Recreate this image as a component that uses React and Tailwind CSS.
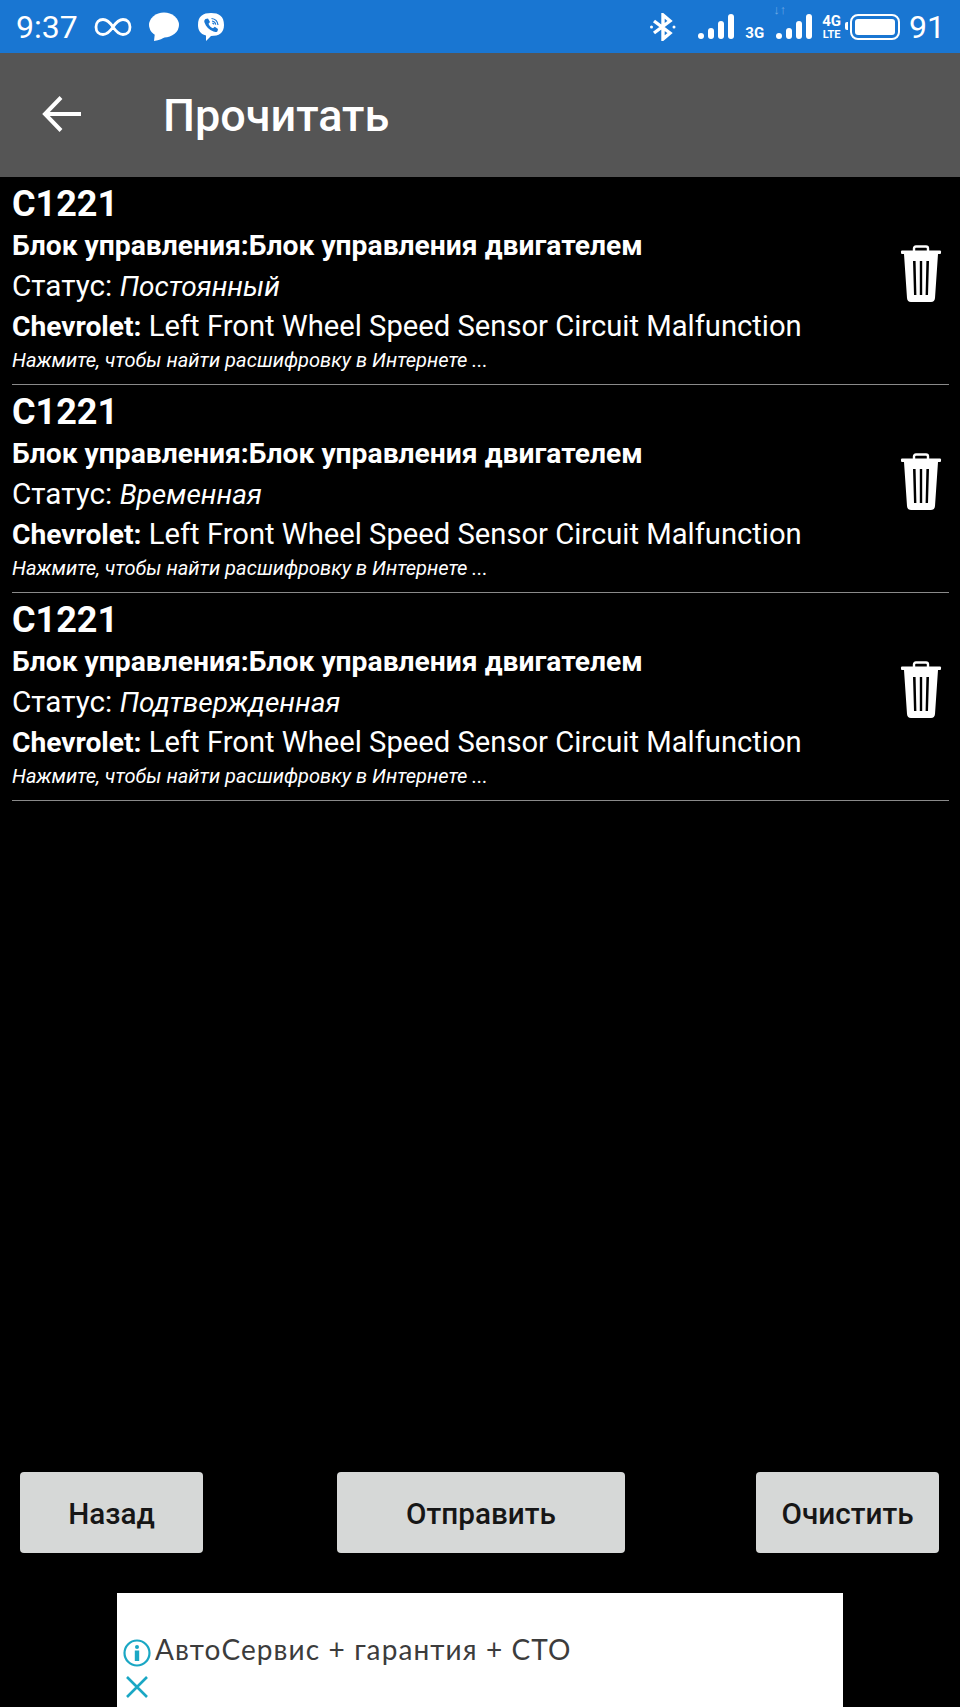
const Trash = () => (
  <svg width="42" height="58" viewBox="0 0 42 58" className="shrink-0">
    <path d="M14 6 V3.5 Q14 1.5 16 1.5 H26 Q28 1.5 28 3.5 V6" fill="none" stroke="#fff" strokeWidth="2.4" />
    <rect x="1" y="5.5" width="40" height="3.6" rx="1" fill="#fff" />
    <path fillRule="evenodd" fill="#fff" d="M4 9 H38 L35 53 Q34.7 57 31 57 H11 Q7.3 57 7 53 Z M13 16 L14 50 H16.4 L15.6 16 Z M19.8 16 V50 H22.2 V16 Z M26.4 16 L25.6 50 H28 L29 16 Z" />
  </svg>
);

const Row = ({ status }) => (
  <div className="flex h-[208px] border-b border-[#8a8a8a] box-border">
    <div className="flex-1 min-w-0 flex flex-col whitespace-nowrap text-white">
      <div className="text-[36px] leading-[44px] font-bold mt-[5px]">C1221</div>
      <div className="text-[28.25px] leading-[40px] font-bold">Блок управления:Блок управления двигателем</div>
      <div className="text-[29.7px] leading-[40px]">
        Статус: <span className="italic text-[28px]">{status}</span>
      </div>
      <div className="text-[29.2px] leading-[39px]">
        <span className="font-bold text-[28.2px]">Chevrolet:</span> Left Front Wheel Speed Sensor Circuit Malfunction
      </div>
      <div className="text-[20.1px] leading-[26px] italic mt-[1px]">Нажмите, чтобы найти расшифровку в Интернете ...</div>
    </div>
    <div className="w-[66px] shrink-0 flex justify-center items-start pt-[68px] pl-[9px]">
      <Trash />
    </div>
  </div>
);

const Signal = () => (
  <svg width="36" height="26" viewBox="0 0 36 26">
    <rect x="0" y="19" width="6" height="6" rx="3" fill="#fff" />
    <rect x="10" y="14" width="6" height="11" rx="3" fill="#fff" />
    <rect x="20" y="7" width="6" height="18" rx="3" fill="#fff" />
    <rect x="30" y="0" width="6" height="25" rx="3" fill="#fff" />
  </svg>
);

const Btn = ({ w, children }) => (
  <button className={`${w} h-[81px] pt-[4px] rounded-[4px] bg-[#d6d8d7] text-[#161616] text-[29.7px] font-medium flex items-center justify-center`}>
    {children}
  </button>
);

export default function App() {
  return (
    <div className="w-[960px] h-[1707px] bg-black flex flex-col overflow-hidden font-['Roboto',sans-serif]">
      <div className="h-[53px] shrink-0 bg-[#1976d2] flex items-center text-white">
        <span className="ml-[16px] text-[32px] leading-none">9:37</span>
        <svg className="ml-[16px]" width="38" height="22" viewBox="0 0 38 22" fill="none" stroke="#fff" strokeWidth="2.8">
          <path d="M19 11 C15 5 12 3.5 9 3.5 C5 3.5 2 6.5 2 11 C2 15.5 5 18.5 9 18.5 C12 18.5 15 17 19 11 C23 5 26 3.5 29 3.5 C33 3.5 36 6.5 36 11 C36 15.5 33 18.5 29 18.5 C26 18.5 23 17 19 11 Z" />
        </svg>
        <svg className="ml-[16px]" width="32" height="30" viewBox="0 0 32 30" fill="#fff">
          <ellipse cx="16" cy="13" rx="15" ry="12.5" />
          <path d="M7 20 L6 29 Q14 28 18 24 Z" />
        </svg>
        <svg className="ml-[17px]" width="28" height="30" viewBox="0 0 28 30">
          <path fill="#fff" d="M14 1 C22 1 27 4 27 13 C27 21 22 24 14 24 L9 29 V23.5 C3 22 1 18 1 13 C1 4 6 1 14 1 Z" />
          <path fill="#1976d2" d="M8.5 7 L11 6.5 L13 10 L11.5 11.8 C12.3 13.8 13.8 15.3 16 16.3 L17.8 14.8 L21 17 L20.5 19.2 C19.5 20.3 18 20.3 16.5 19.6 C12 17.6 9 14.8 7.5 10.5 C7 9 7.4 7.8 8.5 7 Z" />
          <path fill="none" stroke="#1976d2" strokeWidth="1.2" d="M14.5 6.5 C18 6.8 20.5 9 21 13 M15 9 C17 9.2 18.4 10.5 18.7 12.6 M15.4 11.2 C16.2 11.4 16.6 11.8 16.7 12.4" />
        </svg>
        <div className="flex-1" />
        <svg width="26" height="28" viewBox="0 0 26 28" fill="none" stroke="#fff" strokeWidth="3.4" className="mr-[22px]">
          <path d="M4 8 L20 20 L13 26 V2 L20 8 L4 20" />
          <circle cx="1.5" cy="14" r="1.5" fill="#fff" stroke="none" />
          <circle cx="24" cy="14" r="1.5" fill="#fff" stroke="none" />
        </svg>
        <Signal />
        <span className="ml-[11px] mt-[13px] text-[15px] leading-none font-bold">3G</span>
        <div className="relative ml-[12px]">
          <Signal />
          <span className="absolute -top-[11px] left-[-3px] text-[13px] leading-none font-bold text-[#6fa8e3] whitespace-nowrap">↓↑</span>
        </div>
        <div className="ml-[10px] flex flex-col items-center leading-none font-bold">
          <span className="text-[15px] leading-[16px]">4G</span>
          <span className="text-[11px] leading-[12px]">LTE</span>
        </div>
        <div className="ml-[9px] relative w-[50px] h-[26px] rounded-[8px] border-[2.5px] border-white p-[3px]">
          <div className="w-full h-full bg-white rounded-[3px]" />
          <div className="absolute left-[-7px] top-[6px] w-[3px] h-[8px] bg-white rounded-l-[2px]" />
        </div>
        <span className="ml-[9px] mr-[15px] text-[32px] leading-none">91</span>
      </div>

      <div className="h-[124px] shrink-0 bg-[#555555] flex items-center text-white">
        <svg className="ml-[42px] mt-[-2px]" width="40" height="36" viewBox="0 0 40 36" fill="none" stroke="#fff" strokeWidth="4">
          <path d="M39 18 H3 M19 1.5 L3 18 L19 34.5" />
        </svg>
        <span className="ml-[81px] text-[45px] leading-none font-medium mt-[1px]">Прочитать</span>
      </div>

      <div className="flex-1 min-h-0 flex flex-col pl-[12px] pr-[11px]">
        <Row status="Постоянный" />
        <Row status="Временная" />
        <Row status="Подтвержденная" />
      </div>

      <div className="shrink-0 flex pl-[20px]">
        <Btn w="w-[183px]">Назад</Btn>
        <div className="w-[134px] shrink-0" />
        <Btn w="w-[288px]">Отправить</Btn>
        <div className="w-[131px] shrink-0" />
        <Btn w="w-[183px]">Очистить</Btn>
      </div>

      <div className="shrink-0 mt-[40px] mx-auto w-[726px] h-[114px] bg-white flex flex-col items-start pl-[6px] pt-[38px]">
        <div className="flex items-center">
        <svg width="28" height="28" viewBox="0 0 28 28" fill="none" className="mt-[8px]">
          <circle cx="14" cy="14" r="12.5" stroke="#1aa7c4" strokeWidth="2.2" />
          <circle cx="14" cy="8" r="2" fill="#1aa7c4" />
          <rect x="11.8" y="11.5" width="4.4" height="10.5" fill="#1aa7c4" />
        </svg>
        <span className="ml-[4px] text-[28px] leading-[36px] tracking-[1.1px] text-[#3c3c3c] font-['Lato',sans-serif]">АвтоСервис + гарантия + СТО</span>
        </div>
        <svg className="ml-[3px] mt-[9px]" width="22" height="22" viewBox="0 0 22 22" fill="none" stroke="#1aa7c4" strokeWidth="2.6">
          <path d="M1 1 L21 21 M21 1 L1 21" />
        </svg>
      </div>
    </div>
  );
}
